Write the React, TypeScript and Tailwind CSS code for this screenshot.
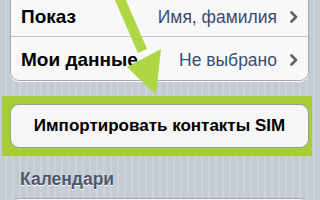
const ROWS = [
  { label: "Показ", value: "Имя, фамилия" },
  { label: "Мои данные", value: "Не выбрано" },
];

function Chevron() {
  return (
    <svg width="8" height="12" viewBox="0 0 8 12" className="shrink-0">
      <path d="M1.5 1.5 L6 6 L1.5 10.5" fill="none" stroke="#5d6065" strokeWidth="2.6" strokeLinecap="round" strokeLinejoin="round" />
    </svg>
  );
}

export default function App() {
  return (
    <div
      className="relative w-[320px] h-[200px] overflow-hidden bg-[repeating-linear-gradient(90deg,#c4cbd3_0px,#c4cbd3_5px,#ccd3da_5px,#ccd3da_7px)]"
      style={{ fontFamily: '"Liberation Sans", Arial, sans-serif' }}
    >
      {/* top group, cut off by the top of the frame */}
      <div className="mx-[10px] -mt-[6px] w-[299px] rounded-b-[9px] border border-t-0 border-[#a5a8ac] bg-[#f8f8f8] shadow-[0_1px_0_#ffffff]">
        {ROWS.map((row, i) => (
          <div
            key={row.label}
            className={`flex h-[43px] items-center justify-between pt-[3px] pl-[10px] pr-[10px] ${
              i === 0 ? "border-b border-[#c3c3c6]" : ""
            }`}
          >
            <span className="text-[19px] font-bold leading-[22px] text-black">{row.label}</span>
            <span className="flex items-center gap-[13px]">
              <span className="text-[17.5px] leading-[22px] text-[#3a4b70]">{row.value}</span>
              <Chevron />
            </span>
          </div>
        ))}
      </div>

      {/* highlighted button */}
      <div className="mt-[15px] ml-[2px] w-[310px] h-[60px] bg-[#a6cd38] pt-[8px] pl-[8px] pr-[3px]">
        <div className="flex h-[44px] items-center justify-center rounded-[9px] border border-[#9aa08e] bg-[#f6f6f6]">
          <span className="text-[17px] font-bold text-black">Импортировать контакты SIM</span>
        </div>
      </div>

      <div className="mt-[13px] px-[20px] text-[17.5px] font-bold leading-[20px] text-[#4b566b] [text-shadow:0_1px_0_#ffffff]">
        Календари
      </div>

      <div className="mx-[10px] mt-[9px] h-[20px] w-[299px] rounded-t-[9px] border border-[#a5a8ac] bg-[#f8f8f8]" />

      {/* green arrow drawn over the list */}
      <svg className="absolute left-0 top-0 pointer-events-none" width="320" height="200" viewBox="0 0 320 200">
        <polygon points="114,-2 125,-2 147,49 138,53" fill="#afd744" />
        <polygon points="127,67 161,49 156,95" fill="#afd744" />
      </svg>
    </div>
  );
}
